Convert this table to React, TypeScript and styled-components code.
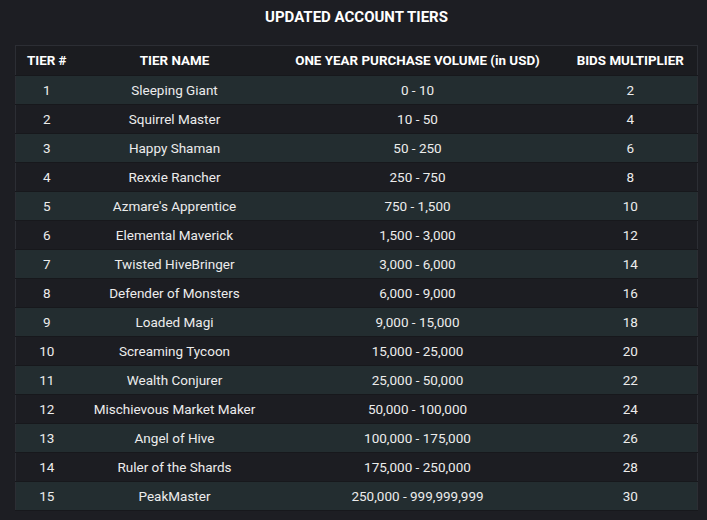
import styled, { createGlobalStyle } from "styled-components";

const tiers = [
  { tier: 1, name: "Sleeping Giant", volume: "0 - 10", bids: 2 },
  { tier: 2, name: "Squirrel Master", volume: "10 - 50", bids: 4 },
  { tier: 3, name: "Happy Shaman", volume: "50 - 250", bids: 6 },
  { tier: 4, name: "Rexxie Rancher", volume: "250 - 750", bids: 8 },
  { tier: 5, name: "Azmare's Apprentice", volume: "750 - 1,500", bids: 10 },
  { tier: 6, name: "Elemental Maverick", volume: "1,500 - 3,000", bids: 12 },
  { tier: 7, name: "Twisted HiveBringer", volume: "3,000 - 6,000", bids: 14 },
  { tier: 8, name: "Defender of Monsters", volume: "6,000 - 9,000", bids: 16 },
  { tier: 9, name: "Loaded Magi", volume: "9,000 - 15,000", bids: 18 },
  { tier: 10, name: "Screaming Tycoon", volume: "15,000 - 25,000", bids: 20 },
  { tier: 11, name: "Wealth Conjurer", volume: "25,000 - 50,000", bids: 22 },
  { tier: 12, name: "Mischievous Market Maker", volume: "50,000 - 100,000", bids: 24 },
  { tier: 13, name: "Angel of Hive", volume: "100,000 - 175,000", bids: 26 },
  { tier: 14, name: "Ruler of the Shards", volume: "175,000 - 250,000", bids: 28 },
  { tier: 15, name: "PeakMaster", volume: "250,000 - 999,999,999", bids: 30 },
];

const GlobalStyle = createGlobalStyle`
  html, body {
    margin: 0;
    background: #1d1e23;
  }
  body {
    font-family: Roboto, "Liberation Sans", sans-serif;
    color: #ececec;
  }
`;

export default function App() {
  return (
    <>
      <GlobalStyle />
      <Page>
        <Title>UPDATED ACCOUNT TIERS</Title>
        <Table>
          <colgroup>
            <col style={{ width: 62 }} />
            <col style={{ width: 194 }} />
            <col style={{ width: 292 }} />
            <col />
          </colgroup>
          <thead>
            <tr>
              <Th>TIER #</Th>
              <Th>TIER NAME</Th>
              <Th>ONE YEAR PURCHASE VOLUME (in USD)</Th>
              <Th>BIDS MULTIPLIER</Th>
            </tr>
          </thead>
          <tbody>
            {tiers.map(({ tier, name, volume, bids }) => (
              <Row key={tier} $striped={tier % 2 === 1}>
                <Td>{tier}</Td>
                <Td>{name}</Td>
                <Td>{volume}</Td>
                <Td>{bids}</Td>
              </Row>
            ))}
          </tbody>
        </Table>
      </Page>
    </>
  );
}

const Page = styled.div`
  width: 707px;
  height: 520px;
  padding: 7px 9px 0 15px;
  box-sizing: border-box;
  display: flex;
  flex-direction: column;
  align-items: center;
`;

const Title = styled.h1`
  margin: 0 0 17px;
  font-size: 15px;
  font-weight: 700;
  line-height: 21px;
  color: #ffffff;
`;

const Table = styled.table`
  width: 100%;
  border-collapse: collapse;
  table-layout: fixed;
  border: 1px solid #2c2e34;
  font-size: 13.5px;
`;

const Th = styled.th`
  height: 29px;
  padding: 0;
  font-size: 13.4px;
  font-weight: 700;
  color: #ffffff;
  text-align: center;
  background: #1b1c20;
  border-bottom: 1px solid #17181c;
`;

const Row = styled.tr<{ $striped: boolean }>`
  background: ${(p) => (p.$striped ? "#232d30" : "#1c1d22")};
  border-bottom: 1px solid #17181c;
`;

const Td = styled.td`
  height: 28px;
  padding: 0;
  text-align: center;
  color: #ececec;
`;
